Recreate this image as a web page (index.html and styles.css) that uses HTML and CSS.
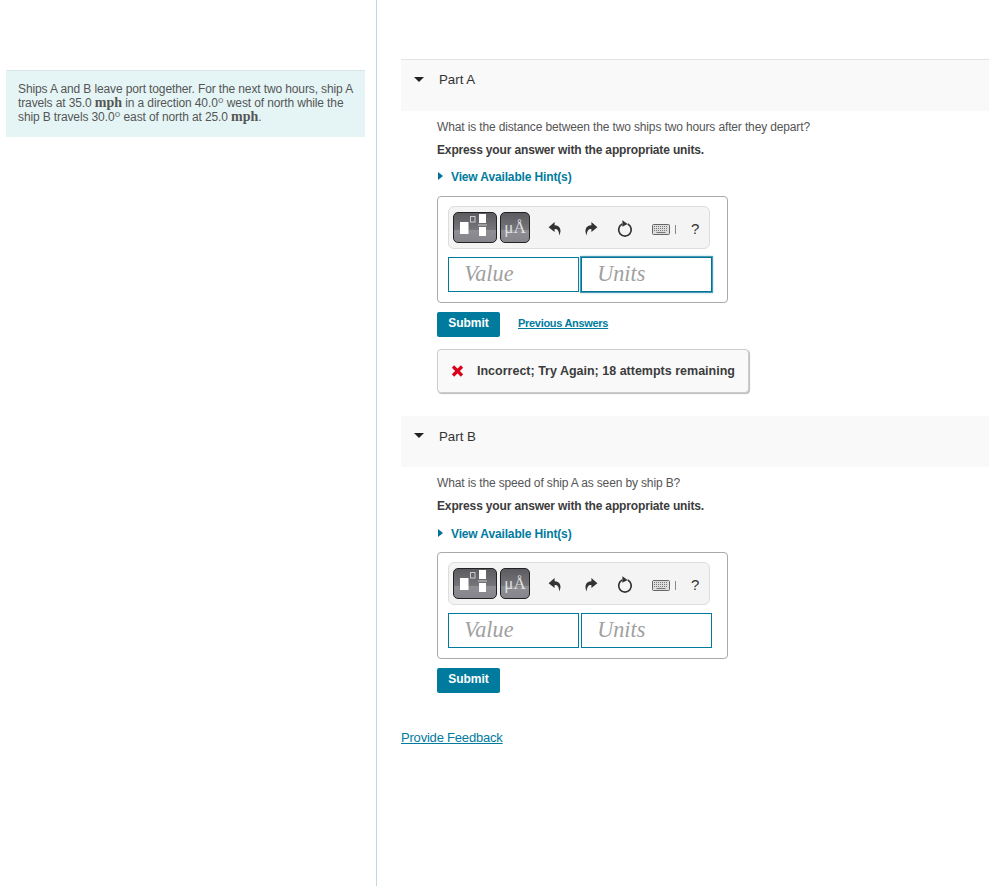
FILE: index.html
```html
<!DOCTYPE html>
<html lang="en">
<head>
    <meta charset="UTF-8">
    <title>Ships A and B</title>
    <link rel="stylesheet" href="styles.css">
</head>
<body>
    <svg class="defs" width="0" height="0" aria-hidden="true">
        <symbol id="ico-templates" viewBox="0 0 42 29">
            <rect x="6" y="9" width="8.5" height="12" fill="#fff"/>
            <rect x="16.5" y="3.5" width="4.5" height="5.5" fill="none" stroke="#ccc" stroke-width="1"/>
            <rect x="25" y="1" width="7" height="9" fill="#fff"/>
            <rect x="24" y="11.5" width="9" height="1" fill="#ccc"/>
            <rect x="25" y="14" width="7" height="9" fill="#fff"/>
        </symbol>
        <symbol id="ico-undo" viewBox="0 0 14 15">
            <path d="M6.6 1 .6 6.2 6.6 11V8C9.6 7.9 11 9.800 11.300 14.500 13.800 9.500 12.600 4.700 6.600 4.300Z" fill="#333"/>
        </symbol>
        <symbol id="ico-redo" viewBox="0 0 14 15">
            <path d="M7.400 1 13.400 6.200 7.400 11V8C4.400 7.900 3 9.800 2.700 14.500 .2 9.500 1.400 4.700 7.400 4.300Z" fill="#333"/>
        </symbol>
        <symbol id="ico-reset" viewBox="0 0 16 17">
            <path d="M10.700 4.100A6.300 6.300 0 1 1 5.200 4.100" fill="none" stroke="#333" stroke-width="1.700"/>
            <path d="M5.400 .2 10.600 4 5.400 6.800Z" fill="#333"/>
        </symbol>
        <symbol id="ico-keyboard" viewBox="0 0 18 11">
            <rect x=".5" y=".5" width="17" height="10" rx="1" fill="#ddd" stroke="#666"/>
            <path d="M2 2.500h14M2 4.500h14M2 6.500h14" stroke="#777" stroke-dasharray="1 1" fill="none"/>
            <path d="M4.500 8.500h9" stroke="#777" fill="none"/>
        </symbol>
    </svg>

    <div class="page">
        <aside class="sidebar">
            <div class="intro">
                Ships A and B leave port together. For the next two hours, ship A
                travels at 35.0 <span class="unit">mph</span> in a direction 40.0<sup>°</sup> west of north while the
                ship B travels 30.0<sup>°</sup> east of north at 25.0 <span class="unit">mph</span>.
            </div>
        </aside>

        <main class="content">
            <section class="part">
                <div class="part-head"><span class="caret"></span>Part A</div>
                <div class="part-body">
                    <p class="question">What is the distance between the two ships two hours after they depart?</p>
                    <p class="express">Express your answer with the appropriate units.</p>
                    <p class="hint"><span class="hint-arrow"></span>View Available Hint(s)</p>
                    <div class="answer">
                        <div class="toolbar">
                            <span class="tool tool-wide"><svg width="42" height="29"><use href="#ico-templates"/></svg></span>
                            <span class="tool tool-mu">μÅ</span>
                            <svg class="ico ico-undo" width="14" height="15"><use href="#ico-undo"/></svg>
                            <svg class="ico ico-redo" width="14" height="15"><use href="#ico-redo"/></svg>
                            <svg class="ico ico-reset" width="16" height="17"><use href="#ico-reset"/></svg>
                            <svg class="ico ico-keyboard" width="18" height="11"><use href="#ico-keyboard"/></svg>
                            <span class="bar"></span>
                            <span class="help">?</span>
                        </div>
                        <div class="fields">
                            <div class="field">Value</div>
                            <div class="field field-focus">Units</div>
                        </div>
                    </div>
                    <div class="actions">
                        <button class="submit">Submit</button>
                        <a class="prev" href="#">Previous Answers</a>
                    </div>
                    <div class="feedback">
                        <svg class="cross" width="13" height="12" viewBox="0 0 13 12"><path d="M2 1.500 11 10.500M11 1.500 2 10.500" stroke="#d9001b" stroke-width="3.200"/></svg>
                        Incorrect; Try Again; 18 attempts remaining
                    </div>
                </div>
            </section>

            <section class="part part-b">
                <div class="part-head"><span class="caret"></span>Part B</div>
                <div class="part-body">
                    <p class="question">What is the speed of ship A as seen by ship B?</p>
                    <p class="express">Express your answer with the appropriate units.</p>
                    <p class="hint"><span class="hint-arrow"></span>View Available Hint(s)</p>
                    <div class="answer">
                        <div class="toolbar">
                            <span class="tool tool-wide"><svg width="42" height="29"><use href="#ico-templates"/></svg></span>
                            <span class="tool tool-mu">μÅ</span>
                            <svg class="ico ico-undo" width="14" height="15"><use href="#ico-undo"/></svg>
                            <svg class="ico ico-redo" width="14" height="15"><use href="#ico-redo"/></svg>
                            <svg class="ico ico-reset" width="16" height="17"><use href="#ico-reset"/></svg>
                            <svg class="ico ico-keyboard" width="18" height="11"><use href="#ico-keyboard"/></svg>
                            <span class="bar"></span>
                            <span class="help">?</span>
                        </div>
                        <div class="fields">
                            <div class="field">Value</div>
                            <div class="field">Units</div>
                        </div>
                    </div>
                    <div class="actions">
                        <button class="submit">Submit</button>
                    </div>
                </div>
            </section>

            <a class="provide" href="#">Provide Feedback</a>
        </main>
    </div>
</body>
</html>
```

FILE: styles.css
```css
html, body {
    margin: 0;
    height: 100%;
}

body {
    font-family: "Liberation Sans", Arial, sans-serif;
    font-size: 12px;
    color: #333;
    background: #fff;
    overflow: hidden;
}

.defs {
    position: absolute;
}

.page {
    display: flex;
    height: 886px;
}

.sidebar {
    box-sizing: border-box;
    width: 377px;
    padding: 70px 11px 0 6px;
    border-right: 1px solid #c5d5e2;
}

.intro {
    box-sizing: border-box;
    height: 67px;
    padding: 11px 8px 0 12px;
    background: #e5f5f6;
    border-top: 1px solid #d9e6ea;
    font-size: 12px;
    line-height: 14px;
    letter-spacing: -0.12px;
    color: #555;
}

.intro sup {
    font-family: "Liberation Serif", serif;
    font-size: 15px;
    line-height: 0;
    vertical-align: -1px;
    color: #666;
}

.unit {
    font-family: "Liberation Serif", "Times New Roman", serif;
    font-weight: bold;
    font-size: 14px;
    letter-spacing: 0;
    color: #555;
}

.content {
    flex: 1;
    min-width: 0;
    padding: 59px 0 0 24px;
}

.part-head {
    box-sizing: border-box;
    height: 52px;
    padding: 12px 0 0 38px;
    background: #f9f9f9;
    border-top: 1px solid #e3e3e3;
    font-size: 13.3px;
    line-height: 15px;
    color: #333;
    position: relative;
}

.caret {
    position: absolute;
    left: 13px;
    top: 17px;
    border-left: 5px solid transparent;
    border-right: 5px solid transparent;
    border-top: 5px solid #222;
}

.part-body {
    padding: 9px 0 0 36px;
}

.part-body p {
    margin: 0;
}

.question {
    height: 23px;
    line-height: 14px;
    letter-spacing: -0.14px;
    color: #555;
}

.express {
    height: 26px;
    line-height: 14px;
    font-weight: bold;
    letter-spacing: -0.15px;
    color: #3c3c3c;
}

.hint {
    box-sizing: border-box;
    height: 27px;
    padding-top: 1px;
    line-height: 14px;
    font-weight: bold;
    letter-spacing: -0.14px;
    color: #007b9e;
    display: flex;
    align-items: flex-start;
}

.part-b .hint {
    padding-top: 2px;
}

.hint-arrow {
    margin: 2px 8px 0 1px;
    border-top: 4.5px solid transparent;
    border-bottom: 4.5px solid transparent;
    border-left: 5px solid #00729a;
}

.answer {
    box-sizing: border-box;
    width: 291px;
    height: 107px;
    padding: 9px 10px;
    border: 1px solid #aaa;
    border-radius: 4px;
}

.toolbar {
    box-sizing: border-box;
    width: 262px;
    height: 43px;
    display: flex;
    align-items: center;
    padding: 0 0 1px 4px;
    background: #f4f4f4;
    border: 1px solid #ddd;
    border-radius: 6px;
}

.tool {
    box-sizing: border-box;
    height: 31px;
    display: flex;
    align-items: center;
    justify-content: center;
    border: 1px solid #222;
    border-radius: 5px;
    background: linear-gradient(#5c5c60 0, #77777b 60%, #8e8e94 60%, #85858b 100%);
}

.tool-wide {
    width: 44px;
}

.tool-mu {
    width: 30px;
    margin-left: 3px;
    padding-top: 2px;
    color: #e2e2e2;
    font-family: "Liberation Serif", serif;
    font-size: 17px;
}

.ico {
    flex: none;
    margin-top: 3px;
}

.ico-undo {
    margin-left: 18px;
}

.ico-redo {
    margin-left: 22px;
}

.ico-reset {
    margin-left: 19px;
}

.ico-keyboard {
    margin-left: 19px;
    margin-top: 4px;
}

.bar {
    width: 1px;
    height: 9px;
    margin: 4px 0 0 5px;
    background: #888;
}

.help {
    margin: 3px 0 0 15px;
    font-size: 15px;
    color: #333;
}

.fields {
    display: flex;
    gap: 2px;
    margin-top: 8px;
}

.field {
    box-sizing: border-box;
    width: 131px;
    height: 35px;
    padding-left: 15.200px;
    border: 1px solid #007b9e;
    font-family: "Liberation Serif", "Times New Roman", serif;
    font-style: italic;
    font-size: 22.200px;
    line-height: 32px;
    color: #a0a0a0;
}

.field-focus {
    border-color: #00729a;
    box-shadow: 0 0 0 1px #4b9ab5, 0 0 2px 1px #a9d3e0;
}

.actions {
    display: flex;
    align-items: center;
    margin-top: 9px;
    height: 25px;
}

.submit {
    width: 63px;
    height: 25px;
    padding: 0 0 3px;
    border: none;
    border-radius: 2px;
    background: #007b9e;
    color: #fff;
    font-family: inherit;
    font-size: 12px;
    font-weight: bold;
}

.prev {
    margin: 0 0 3px 18px;
    font-size: 11px;
    font-weight: bold;
    letter-spacing: -0.3px;
    color: #007b9e;
}

.feedback {
    box-sizing: border-box;
    display: flex;
    align-items: center;
    width: 312px;
    height: 44px;
    margin-top: 12px;
    padding-left: 13px;
    background: #f9f9f9;
    border: 1px solid #ccc;
    border-radius: 4px;
    box-shadow: 1px 1px 1px #bbb;
    font-size: 12.500px;
    font-weight: bold;
    color: #3c3c3c;
}

.cross {
    margin-right: 13px;
}

.part-b {
    margin-top: 23px;
}

.part-b .part-head {
    height: 51px;
    border-top: none;
    padding-top: 13px;
}

.provide {
    display: block;
    margin-top: 37px;
    font-size: 13px;
    line-height: 16px;
    letter-spacing: -0.2px;
    color: #007b9e;
}
```
